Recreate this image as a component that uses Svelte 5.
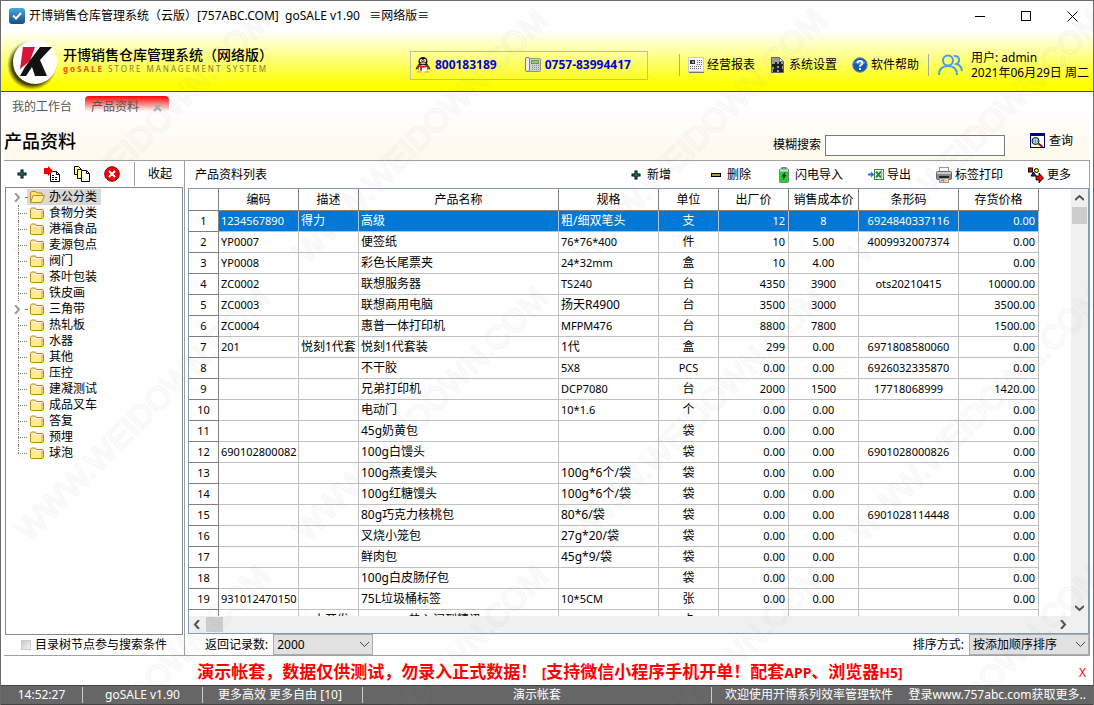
<script>
	let keyword = '';
	let limit = '2000';
	let sort = '按添加顺序排序';
	let searchTree = false;
	let current = 0;
	let currentNode = 0;

	const categories = [
		{ name: '办公分类', children: true, open: true },
		{ name: '食物分类' },
		{ name: '港福食品' },
		{ name: '麦源包点' },
		{ name: '阀门' },
		{ name: '茶叶包装' },
		{ name: '铁皮画' },
		{ name: '三角带', children: true },
		{ name: '热轧板' },
		{ name: '水器' },
		{ name: '其他' },
		{ name: '压控' },
		{ name: '建凝测试' },
		{ name: '成品叉车' },
		{ name: '答复' },
		{ name: '预埋' },
		{ name: '球泡' }
	];

	const columns = [
		{ title: '编码', width: 80 },
		{ title: '描述', width: 60 },
		{ title: '产品名称', width: 200 },
		{ title: '规格', width: 100 },
		{ title: '单位', width: 60, align: 'center' },
		{ title: '出厂价', width: 70, align: 'right' },
		{ title: '销售成本价', width: 70, align: 'center' },
		{ title: '条形码', width: 100, align: 'center' },
		{ title: '存货价格', width: 80, align: 'right' }
	];

	const rows = [
		['1234567890', '得力', '高级', '粗/细双笔头', '支', '12', '8', '6924840337116', '0.00'],
		['YP0007', '', '便签纸', '76*76*400', '件', '10', '5.00', '4009932007374', '0.00'],
		['YP0008', '', '彩色长尾票夹', '24*32mm', '盒', '10', '4.00', '', '0.00'],
		['ZC0002', '', '联想服务器', 'TS240', '台', '4350', '3900', 'ots20210415', '10000.00'],
		['ZC0003', '', '联想商用电脑', '扬天R4900', '台', '3500', '3000', '', '3500.00'],
		['ZC0004', '', '惠普一体打印机', 'MFPM476', '台', '8800', '7800', '', '1500.00'],
		['201', '悦刻1代套', '悦刻1代套装', '1代', '盒', '299', '0.00', '6971808580060', '0.00'],
		['', '', '不干胶', '5X8', 'PCS', '0.00', '0.00', '6926032335870', '0.00'],
		['', '', '兄弟打印机', 'DCP7080', '台', '2000', '1500', '17718068999', '1420.00'],
		['', '', '电动门', '10*1.6', '个', '0.00', '0.00', '', '0.00'],
		['', '', '45g奶黄包', '', '袋', '0.00', '0.00', '', '0.00'],
		['690102800082', '', '100g白馒头', '', '袋', '0.00', '0.00', '6901028000826', '0.00'],
		['', '', '100g燕麦馒头', '100g*6个/袋', '袋', '0.00', '0.00', '', '0.00'],
		['', '', '100g红糖馒头', '100g*6个/袋', '袋', '0.00', '0.00', '', '0.00'],
		['', '', '80g巧克力核桃包', '80*6/袋', '袋', '0.00', '0.00', '6901028114448', '0.00'],
		['', '', '叉烧小笼包', '27g*20/袋', '袋', '0.00', '0.00', '', '0.00'],
		['', '', '鲜肉包', '45g*9/袋', '袋', '0.00', '0.00', '', '0.00'],
		['', '', '100g白皮肠仔包', '', '袋', '0.00', '0.00', '', '0.00'],
		['931012470150', '', '75L垃圾桶标签', '10*5CM', '张', '0.00', '0.00', '', '0.00'],
		['', '　小开发', '　　　　热入问到精讯', '', '卡', '0.00', '0.00', '', '0.00']
	];

	const actions = [
		{ icon: 'plus', label: '新增' },
		{ icon: 'minus', label: '删除' },
		{ icon: 'battery', label: '闪电导入' },
		{ icon: 'excel', label: '导出' },
		{ icon: 'printer', label: '标签打印' },
		{ icon: 'more', label: '更多' }
	];

	function isAscii(text) {
		return /^[\x20-\x7e]*$/.test(text);
	}
</script>

{#snippet icon(name)}
	<svg class="icon" width="16" height="16" viewBox="0 0 16 16" aria-hidden="true">
		{#if name === 'app'}
			<defs>
				<linearGradient id="app-blue" x2="0" y2="1">
					<stop offset="0" stop-color="#4aa8e0" />
					<stop offset="1" stop-color="#164b82" />
				</linearGradient>
			</defs>
			<rect width="16" height="16" rx="3" fill="url(#app-blue)" />
			<path d="M4 7.5l3 3 5-5.5" fill="none" stroke="#fff" stroke-width="2" />
		{:else if name === 'penguin'}
			<path d="M2.500 8L.5 12.500l2-.5zM13.500 8l2 4.500-2-.5z" fill="#111" />
			<ellipse cx="8" cy="10" rx="5.500" ry="5" fill="#111" />
			<ellipse cx="8" cy="4.500" rx="4.500" ry="4.500" fill="#111" />
			<ellipse cx="8" cy="11.500" rx="4.500" ry="3.500" fill="#fff" />
			<ellipse cx="6.300" cy="3.600" rx="1.400" ry="1.700" fill="#fff" />
			<ellipse cx="9.700" cy="3.600" rx="1.400" ry="1.700" fill="#fff" />
			<circle cx="6.700" cy="3.800" r=".6" fill="#111" />
			<circle cx="9.300" cy="3.800" r=".6" fill="#111" />
			<ellipse cx="8" cy="6.300" rx="2.800" ry="1" fill="#f8b62b" />
			<path d="M3 7.500q5 2.500 10 0v2q-3 1.500-6 1.200v3l-2-.3v-3.200l-2-1z" fill="#e5201b" />
			<path d="M1.500 15.500q2-3 5.500 0zM9 15.500q3.500-3 5.500 0z" fill="#f59a1b" />
		{:else if name === 'phone'}
			<rect x="3.500" y="1.500" width="12" height="13" rx="1" fill="#d0d4d0" stroke="#8d928d" />
			<rect x=".5" y=".5" width="4" height="14" rx="1.500" fill="#eee" stroke="#7d827d" />
			<rect x="6.500" y="3.500" width="7" height="3" fill="#8ed05f" stroke="#6a9b4b" />
			<path d="M7 8.500h7M7 10.500h7M7 12.500h7" stroke="#858a85" stroke-dasharray="1 1" />
		{:else if name === 'report'}
			<rect x=".5" y=".5" width="15" height="14" fill="#f6f6f6" stroke="#ccc" />
			<rect x="2" y="3" width="5" height="4" fill="#333" />
			<rect x="4" y="4" width="2" height="2" fill="#aaa" />
			<path d="M9 3.500h5M9 5.500h5M9 7.500h5M2 9.500h12M2 11.500h12" stroke="#666" stroke-dasharray="1 1" />
			<path d="M1 15.500h15" stroke="#777" />
		{:else if name === 'settings'}
			<path d="M1.500.5h8l4 4v11h-12z" fill="#9a9a9a" stroke="#666" />
			<path d="M9.500.5v4h4z" fill="#eee" stroke="#777" />
			<path d="M2 7h3V5h2v2h2V5h2v2h2v2h-1v3h1v3H9v-2H7v2H3v-3h1v-2H2z" fill="#1c1c1c" />
			<rect x="7" y="9" width="2" height="2" fill="#999" />
		{:else if name === 'help'}
			<circle cx="8" cy="8" r="7.300" fill="#1557b7" stroke="#6f8eb9" />
			<path d="M2.500 6a6 5 0 0 1 11 0q-5 3-11 0" fill="#5a93dd" />
			<path d="M5.600 6a2.400 2.200 0 1 1 3.400 2q-1 .5-1 1.800" fill="none" stroke="#fff" stroke-width="1.800" />
			<rect x="7" y="11" width="2" height="2" fill="#fff" />
		{:else if name === 'search'}
			<rect x=".5" y=".5" width="14" height="14" fill="#fff" stroke="#000080" />
			<path d="M0 1.500h15" stroke="#000080" stroke-width="3" />
			<circle cx="5.500" cy="8" r="3.500" fill="#a5e2e6" stroke="#111" />
			<path d="M5.500 5.500v5M3 8h5" stroke="#d33" stroke-dasharray="1 1" />
			<path d="M8.500 10.500l4 3.500" stroke="#9b1010" stroke-width="2" />
		{:else if name === 'plus'}
			<path d="M6.500 3.500h3v3h3v3h-3v3h-3v-3h-3v-3h3z" fill="#000" />
			<path d="M8 4.500v7M4.500 8h7" stroke="#159a9a" />
		{:else if name === 'minus'}
			<rect x="3" y="6" width="10" height="4" fill="#000" />
			<path d="M4 8h8" stroke="#b0a020" stroke-width="2" />
		{:else if name === 'battery'}
			<rect x="6" y="0" width="4" height="3" fill="#aaa" stroke="#666" />
			<rect x="3.500" y="2" width="9" height="13.500" rx="1" fill="#29cd3a" stroke="#6b8b6f" />
			<path d="M4 3.500h8" stroke="#ddd" stroke-width="2" />
			<path d="M9.500 4.500l-4 5h2l-1 4 4-5.500h-2z" fill="#052b09" />
		{:else if name === 'excel'}
			<path d="M0 6.500h3v-2l3.500 3-3.500 3v-2H0z" fill="#2d6fd0" />
			<rect x="6.500" y="2.500" width="9" height="10" fill="#fff" stroke="#398142" />
			<path d="M8 4.500l5 6M13 4.500l-5 6" stroke="#2d8b39" stroke-width="2" />
			<path d="M13.500 3v9M14 6h2M14 9h2" stroke="#8dbd92" />
		{:else if name === 'printer'}
			<rect x="3.500" y=".5" width="9" height="5" fill="#fff" stroke="#999" />
			<rect x=".5" y="4.500" width="15" height="8" rx="1" fill="#888" stroke="#666" />
			<path d="M1 6h14" stroke="#ccc" stroke-width="2" />
			<path d="M3 10h10" stroke="#222" stroke-width="2" />
			<rect x="3.500" y="11.500" width="9" height="4" fill="#fff" stroke="#999" />
			<path d="M4.500 13.500h2" stroke="#16a6dd" stroke-width="2" />
			<path d="M6.500 13.500h2" stroke="#e62a8b" stroke-width="2" />
			<path d="M8.500 13.500h3" stroke="#f3c928" stroke-width="2" />
		{:else if name === 'more'}
			<rect x=".5" y="1" width="4" height="4" fill="#e00" stroke="#000" />
			<circle cx="8.500" cy="3.500" r="2" fill="#ff0" stroke="#000" />
			<path d="M5.500 5l2.500 4H3z" fill="#22f" stroke="#000" />
			<path d="M8 9h3V6l4.500 5-4.500 5v-3H8z" fill="#e00" stroke="#000" stroke-width=".8" />
		{:else if name === 'addchild'}
			<path d="M6.500 6.500v9h9v-7l-3-3h-4" fill="#fff" stroke="#000" />
			<path d="M12.500 5.500v3h3" fill="none" stroke="#000" />
			<path d="M8 9.500h3M8 11.500h6M8 13.500h6" stroke="#000" stroke-dasharray="2 1" />
			<path d="M0 2h4V0l5 5-5 5V8H0z" fill="#e00" />
		{:else if name === 'copy'}
			<path d="M.5.5h4l3 3v5h-7z" fill="#ffff88" stroke="#000" />
			<path d="M3.500 3.500h4l3 3v6h-7z" fill="#ffff88" stroke="#000" />
			<path d="M7.500 4.500h5l3 3v8h-8z" fill="#fff" stroke="#000" />
			<path d="M12.500 4.500v3h3" fill="none" stroke="#000" />
		{:else if name === 'remove'}
			<circle cx="8" cy="8" r="7.300" fill="#f0000b" stroke="#8b0000" />
			<path d="M5 5l6 6M11 5l-6 6" stroke="#fff" stroke-width="2" />
		{:else if name === 'folder'}
			<path d="M1.500 13V4.500l1-1.500h4l1 1.500h6.500l.5 1v7l-1 1h-11z" fill="#ffec8c" stroke="#c08a10" />
			<path d="M2.500 5.500h10" stroke="#fffbd8" />
			<path d="M13 6v7" stroke="#d9a520" />
		{:else if name === 'folder-open'}
			<path d="M1.500 13V4l1-1.500h4l1 1.500h5.500v3" fill="#ffe680" stroke="#c08a10" />
			<path d="M1.500 13.500l2.500-7h11.500l-3 7z" fill="#fff0a0" stroke="#c08a10" />
		{/if}
	</svg>
{/snippet}

{#snippet arrow(points)}
	<svg class="arrow" width="9" height="9" viewBox="0 0 9 9" aria-hidden="true">
		<polyline {points} fill="none" stroke="currentColor" stroke-width="2" />
	</svg>
{/snippet}

<div class="window">
	<div class="titlebar">
		{@render icon('app')}
		<span class="caption">开博销售仓库管理系统（云版）[757ABC.COM] &nbsp;goSALE v1.90 &nbsp; ≡网络版≡</span>
		<button class="win-button" aria-label="最小化">
			<svg width="11" height="11"><path d="M0 5.500h10" stroke="#000" /></svg>
		</button>
		<button class="win-button" aria-label="最大化">
			<svg width="11" height="11"><rect x=".5" y=".5" width="9" height="9" fill="none" stroke="#000" /></svg>
		</button>
		<button class="win-button" aria-label="关闭">
			<svg width="11" height="11"><path d="M.5.5l10 10M10.500.5l-10 10" stroke="#000" /></svg>
		</button>
	</div>

	<header>
		<svg class="logo" width="54" height="52" viewBox="0 0 54 52" aria-hidden="true">
			<defs>
				<radialGradient id="logo-shadow">
					<stop offset=".8" stop-color="#332f00" stop-opacity=".9" />
					<stop offset="1" stop-color="#554f00" stop-opacity="0" />
				</radialGradient>
			</defs>
			<circle cx="25" cy="26" r="25" fill="url(#logo-shadow)" />
			<circle cx="28" cy="23" r="22" fill="#fff" />
			<path d="M16 8h12l-5 14-10 8z" fill="#d5163c" />
			<path d="M33 8h12L33 21l7 16H28l-3-9-6 9h-6l5-9z" fill="#111" />
		</svg>
		<div class="brand">
			<strong>开博销售仓库管理系统（网络版）</strong>
			<small><b>goSALE</b> STORE MANAGEMENT SYSTEM</small>
		</div>
		<div class="contact">
			<a href="#qq">{@render icon('penguin')}800183189</a>
			<a href="#tel">{@render icon('phone')}0757-83994417</a>
		</div>
		<nav class="header-nav">
			<button>{@render icon('report')}经营报表</button>
			<button>{@render icon('settings')}系统设置</button>
			<button>{@render icon('help')}软件帮助</button>
		</nav>
		<div class="user">
			<svg width="26" height="22" viewBox="0 0 26 22" fill="none" stroke="#45a0ea" stroke-width="2" aria-hidden="true">
				<circle cx="10" cy="6.500" r="5" />
				<path d="M1 21q0-9 9-9t9 9M16 2q5-.5 5 4 0 3-2.500 4 5 1.500 5.500 7" />
			</svg>
			<div>
				<div>用户: admin</div>
				<div>2021年06月29日 周二</div>
			</div>
		</div>
	</header>

	<div class="top">
		<div class="tabs">
			<button class="tab">我的工作台</button>
			<button class="tab active">产品资料
				<svg width="9" height="9"><path d="M1 1l7 7M8 1l-7 7" stroke="#aaa" stroke-width="2" /></svg>
			</button>
		</div>
		<div class="page-head">
			<h1>产品资料</h1>
			<label for="keyword">模糊搜索</label>
			<input id="keyword" type="text" bind:value={keyword} />
			<button>{@render icon('search')}查询</button>
		</div>
	</div>

	<main>
		<aside>
			<div class="tree-tools">
				<button aria-label="新增分类">{@render icon('plus')}</button>
				<button aria-label="新增子类">{@render icon('addchild')}</button>
				<button aria-label="复制分类">{@render icon('copy')}</button>
				<button aria-label="删除分类">{@render icon('remove')}</button>
				<button class="collapse">收起</button>
			</div>
			<ul class="tree">
				{#each categories as node, i}
					<li class:parent={node.children} class:last={i === categories.length - 1}>
						<span class="branch">
							{#if node.children}{@render arrow('2,0 6,4.5 2,9')}{/if}
						</span>
						<button class:selected={currentNode === i} on:click={() => (currentNode = i)}>
							{@render icon(node.open ? 'folder-open' : 'folder')}{node.name}
						</button>
					</li>
				{/each}
			</ul>
			<label class="tree-option">
				<input type="checkbox" bind:checked={searchTree} />目录树节点参与搜索条件
			</label>
		</aside>

		<section>
			<div class="list-tools">
				<h2>产品资料列表</h2>
				{#each actions as action}
					<button class={action.icon}>{@render icon(action.icon)}{action.label}</button>
				{/each}
			</div>

			<div class="grid">
				<div class="rows">
					<table>
						<colgroup>
							<col style="width: 30px" />
							{#each columns as col}
								<col style="width: {col.width}px" />
							{/each}
						</colgroup>
						<thead>
							<tr>
								<th></th>
								{#each columns as col}
									<th>{col.title}</th>
								{/each}
							</tr>
						</thead>
						<tbody>
							{#each rows as row, i}
								<tr class:selected={current === i} on:click={() => (current = i)}>
									<th class="ascii">{i + 1}</th>
									{#each row as cell, c}
										<td class={columns[c].align} class:ascii={isAscii(cell)}>{cell}</td>
									{/each}
								</tr>
							{/each}
						</tbody>
					</table>
				</div>
				<div class="vscroll">
					{@render arrow('0,6 4.5,2 9,6')}
					<div class="thumb"></div>
					{@render arrow('0,2 4.5,6 9,2')}
				</div>
				<div class="hscroll">
					{@render arrow('6,0 2,4.5 6,9')}
					<div class="thumb"></div>
					{@render arrow('2,0 6,4.5 2,9')}
				</div>
			</div>

			<div class="list-foot">
				<label for="limit">返回记录数:</label>
				<span class="select small">
					<select id="limit" bind:value={limit}>
						<option>2000</option>
						<option>5000</option>
					</select>
					<svg width="9" height="5"><path d="M0 0l4.500 4.500L9 0" fill="none" stroke="#444" /></svg>
				</span>
				<label for="sort" class="sort-label">排序方式:</label>
				<span class="select wide">
					<select id="sort" bind:value={sort}>
						<option>按添加顺序排序</option>
						<option>按编码排序</option>
					</select>
					<svg width="9" height="5"><path d="M0 0l4.500 4.500L9 0" fill="none" stroke="#444" /></svg>
				</span>
			</div>
		</section>
	</main>

	<div class="notice">
		<p>演示帐套，数据仅供测试，勿录入正式数据！ <small>[</small>支持微信小程序手机开单！配套<small>APP</small>、浏览器<small>H5]</small></p>
		<button aria-label="关闭提示">X</button>
	</div>

	<footer>
		<span class="clock">14:52:27</span>
		<span class="version">goSALE v1.90</span>
		<span class="slogan">更多高效 更多自由 [10]</span>
		<span class="account">演示帐套</span>
		<span class="welcome">欢迎使用开博系列效率管理软件 &nbsp; &nbsp; 登录www.757abc.com获取更多..</span>
	</footer>

	<svg class="watermark" width="100%" height="100%" aria-hidden="true">
		<defs>
			<pattern id="mark" width="278" height="278" x="4" y="-10" patternUnits="userSpaceOnUse">
				<text x="24" y="274" transform="rotate(-45 24 274)">WWW.WEIDOWN.COM</text>
			</pattern>
		</defs>
		<rect width="100%" height="100%" fill="url(#mark)" />
	</svg>
</div>

<style>
	:global(body) {
		margin: 0;
	}

	.window {
		position: relative;
		display: flex;
		flex-direction: column;
		box-sizing: border-box;
		height: 100vh;
		border: 1px solid #6b6b6b;
		border-bottom: 0;
		background: #fff;
		color: #000;
		font: 12px/16px 'Noto Sans', 'Noto Sans CJK SC', sans-serif;
		overflow: hidden;
		white-space: nowrap;
	}

	button,
	input,
	select {
		font: inherit;
		color: inherit;
	}

	button {
		display: flex;
		align-items: center;
		gap: 3px;
		padding: 0;
		border: 0;
		background: none;
	}

	.icon {
		flex: none;
		display: block;
	}

	.titlebar {
		display: flex;
		align-items: center;
		height: 30px;
		padding-left: 8px;
		gap: 4px;
	}

	.caption {
		flex: 1;
	}

	.win-button {
		justify-content: center;
		width: 42px;
		height: 30px;
	}

	header {
		display: flex;
		align-items: center;
		height: 52px;
		padding-top: 8px;
		border-bottom: 1px solid #e60000;
		background: linear-gradient(#fff, #ff0 90%);
	}

	.logo {
		flex: none;
		margin-left: 6px;
	}

	.brand {
		display: flex;
		flex-direction: column;
		flex: 1;
		margin-left: 2px;
		padding-bottom: 8px;
	}

	.brand strong {
		font-size: 14px;
		font-weight: 500;
		line-height: 16px;
	}

	.brand small {
		font-size: 8px;
		line-height: 12px;
		letter-spacing: 2px;
		color: #7d7a40;
	}

	.brand b {
		color: #ff4a00;
	}

	.contact {
		display: flex;
		gap: 28px;
		align-items: center;
		box-sizing: border-box;
		width: 238px;
		height: 29px;
		margin-right: 31px;
		padding-left: 4px;
		border: 1px solid #bbb;
	}

	.contact a {
		display: flex;
		align-items: center;
		gap: 4px;
		color: #0000e0;
		font-weight: 700;
		text-decoration: none;
	}

	.header-nav {
		display: flex;
		gap: 15px;
		padding: 3px 9px 3px 8px;
		border-left: 1px solid #a8a8a8;
		border-right: 1px solid #a8a8a8;
	}

	.user {
		display: flex;
		align-items: center;
		gap: 7px;
		margin: 0 4px 0 9px;
		line-height: 15px;
	}

	.top {
		background: linear-gradient(#fff 20%, #fff9ec);
		margin: 0 3px;
		border-bottom: 1px solid #a0a0a0;
	}

	.tabs {
		display: flex;
		padding: 4px 0 0 8px;
		gap: 13px;
	}

	.tab {
		height: 22px;
		color: #555;
	}

	.tab.active {
		gap: 14px;
		padding: 0 7px 0 6px;
		border-radius: 4px 4px 0 0;
		background: linear-gradient(#f00, #fff 70%, transparent 70%);
	}

	.page-head {
		display: flex;
		align-items: center;
		height: 38px;
		padding: 4px 17px 0 0;
	}

	h1 {
		flex: 1;
		margin: 0;
		font-size: 18px;
		line-height: 24px;
		font-weight: 500;
	}

	.page-head label {
		margin: 8px 4px 0 0;
	}

	.page-head input {
		box-sizing: border-box;
		width: 180px;
		height: 21px;
		margin: 8px 25px 0 0;
		padding: 0 3px;
		border: 1px solid #7a7a7a;
		background: #fff;
	}

	main {
		display: flex;
		flex: 1;
		min-height: 0;
		margin: 0 3px;
		border-bottom: 1px solid #a0a0a0;
	}

	aside {
		display: flex;
		flex-direction: column;
		flex: none;
		width: 180px;
		border-right: 1px solid #a0a0a0;
	}

	.tree-tools {
		display: flex;
		align-items: center;
		gap: 14px;
		height: 26px;
		padding-left: 10px;
	}

	.collapse {
		height: 24px;
		padding-left: 13px;
		border-left: 1px solid #a0a0a0;
	}

	.tree {
		flex: 1;
		margin: 0 1px;
		padding: 1px 0 0 7px;
		border: 1px solid #828790;
		list-style: none;
	}

	.tree li {
		display: flex;
		height: 16px;
	}

	.branch {
		position: relative;
		width: 14px;
		color: #999;
	}

	.branch::before {
		content: '';
		position: absolute;
		left: 5px;
		top: 0;
		bottom: 0;
		border-left: 1px dotted #808080;
	}

	.branch::after {
		content: '';
		position: absolute;
		left: 5px;
		right: 0;
		top: 8px;
		border-top: 1px dotted #808080;
	}

	.parent .branch::before {
		display: none;
	}

	.parent .branch::after {
		left: 12px;
	}

	.last .branch::before {
		bottom: 8px;
	}

	.branch .arrow {
		display: block;
		margin-top: 4px;
	}

	.tree button {
		height: 16px;
		gap: 4px;
		padding: 0 4px 0 2px;
	}

	.tree .selected {
		background: #d9d9d9;
	}

	.tree-option {
		display: flex;
		align-items: center;
		gap: 4px;
		height: 20px;
		padding-left: 17px;
	}

	.tree-option input {
		appearance: none;
		width: 10px;
		height: 10px;
		margin: 0;
		border: 1px solid #ccc;
		background: linear-gradient(135deg, #c8ccd0, #f4f4f4);
	}

	section {
		display: flex;
		flex-direction: column;
		flex: 1;
		min-width: 0;
		padding-left: 3px;
		border-right: 1px solid #a0a0a0;
	}

	.list-tools {
		display: flex;
		align-items: center;
		gap: 25px;
		height: 27px;
		padding: 0 18px 0 7px;
	}

	h2 {
		flex: 1;
		margin: 0;
		font-size: 12px;
		font-weight: 400;
	}

	.list-tools .minus {
		margin-left: 12px;
	}

	.grid {
		display: grid;
		grid-template-columns: 1fr 17px;
		grid-template-rows: 1fr 17px;
		flex: 1;
		min-height: 0;
		border: 1px solid #7f9db9;
	}

	.rows {
		overflow: hidden;
	}

	table {
		width: 850px;
		table-layout: fixed;
		border-collapse: separate;
		border-spacing: 0;
	}

	th,
	td {
		box-sizing: border-box;
		height: 21px;
		padding: 0 2px;
		border-right: 1px solid #c0c0c0;
		border-bottom: 1px solid #c0c0c0;
		font-weight: 400;
		text-align: left;
		overflow: hidden;
	}

	td.right {
		padding-right: 3px;
	}

	th {
		border-color: #808080;
		text-align: center;
	}

	thead th {
		height: 22px;
		padding: 0;
	}

	.ascii {
		font-size: 11px;
	}

	.center {
		text-align: center;
	}

	.right {
		text-align: right;
	}

	.selected td {
		background: #0078d7;
		color: #fff;
	}

	.vscroll,
	.hscroll {
		display: flex;
		align-items: center;
		background: #f0f0f0;
		color: #505050;
	}

	.vscroll {
		flex-direction: column;
		padding: 5px 0 3px;
	}

	.hscroll {
		grid-column: 1 / 3;
		padding: 0 20px 0 4px;
	}

	.vscroll .thumb {
		width: 15px;
		height: 17px;
		margin: 4px 0 auto;
		background: #cdcdcd;
	}

	.hscroll .thumb {
		width: 17px;
		height: 15px;
		margin: 0 auto 0 4px;
		background: #cdcdcd;
	}

	.list-foot {
		display: flex;
		align-items: center;
		gap: 5px;
		height: 21px;
		padding-left: 17px;
	}

	.sort-label {
		margin-left: auto;
	}

	.select {
		position: relative;
	}

	.select select {
		display: block;
		box-sizing: border-box;
		width: 100%;
		height: 21px;
		padding: 0 3px;
		border: 1px solid #adadad;
		border-radius: 0;
		background: #e1e1e1;
		appearance: none;
	}

	.select svg {
		position: absolute;
		right: 4px;
		top: 8px;
		pointer-events: none;
	}

	.small {
		width: 100px;
	}

	.wide {
		width: 120px;
	}

	.notice {
		display: flex;
		align-items: center;
		height: 29px;
		padding: 4px 7px 0 20px;
		box-sizing: border-box;
		color: #f00;
	}

	.notice p {
		flex: 1;
		margin: 0;
		text-align: center;
		font-size: 17px;
		line-height: 24px;
		font-weight: 700;
	}

	.notice small {
		font-size: 14px;
	}

	footer {
		display: flex;
		align-items: center;
		height: 20px;
		background: #666;
		color: #fff;
		box-shadow: inset 0 1px #444, inset 0 -1px #444;
	}

	footer span {
		box-sizing: border-box;
		border-right: 1px solid #ccc;
		text-align: center;
	}

	.clock {
		width: 82px;
	}

	.version {
		width: 120px;
	}

	.slogan {
		width: 160px;
		padding-left: 15px;
		text-align: left;
	}

	.account {
		flex: 1;
	}

	footer .welcome {
		width: 381px;
		padding-left: 13px;
		border: 0;
		text-align: left;
		overflow: hidden;
	}

	.watermark {
		position: absolute;
		inset: 0;
		pointer-events: none;
	}

	.watermark text {
		font: 32px 'Liberation Sans', sans-serif;
		fill: none;
		stroke: #808080;
		stroke-width: 2;
		stroke-opacity: 0.06;
	}
</style>
